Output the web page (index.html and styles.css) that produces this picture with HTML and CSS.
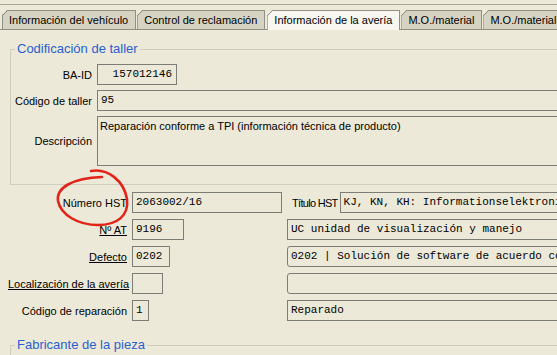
FILE: index.html
```html
<!DOCTYPE html>
<html lang="es">
<head>
	<meta charset="UTF-8">
	<title>Información de la avería</title>
	<link rel="stylesheet" href="styles.css">
</head>
<body>
	<div class="window">
		<div class="topbar"></div>
		<div class="tabs">
			<div class="tab">Información del vehículo</div>
			<div class="tab">Control de reclamación</div>
			<div class="tab active">Información de la avería</div>
			<div class="tab">M.O./material</div>
			<div class="tab">M.O./material e</div>
		</div>
		<div class="panel">
			<fieldset class="group">
				<legend>Codificación de taller</legend>
				<div class="form taller">
					<label>BA-ID</label>
					<div class="field num baid">157012146</div>
					<label>Código de taller</label>
					<div class="field num">95</div>
					<label>Descripción</label>
					<div class="field area">Reparación conforme a TPI (información técnica de producto)</div>
				</div>
			</fieldset>

			<div class="form averia">
				<label class="hst">Número HST</label>
				<div class="field num">2063002/16</div>
				<div class="titulo">
					<label class="narrow">Título HST</label>
					<div class="field num">KJ, KN, KH: Informationselektronik</div>
				</div>

				<label><a href="#">Nº AT</a></label>
				<div class="field num w-at">9196</div>
				<div class="field num">UC unidad de visualización y manejo</div>

				<label><a href="#">Defecto</a></label>
				<div class="field num w-def">0202</div>
				<div class="field num round">0202 | Solución de software de acuerdo con TPI</div>

				<label><a href="#">Localización de la avería</a></label>
				<div class="field num w-loc"></div>
				<div class="field num round"></div>

				<label>Código de reparación</label>
				<div class="field num w-rep">1</div>
				<div class="field num">Reparado</div>
			</div>

			<fieldset class="group fabricante">
				<legend>Fabricante de la pieza</legend>
			</fieldset>
		</div>

		<svg class="mark" width="557" height="355" viewBox="0 0 557 355">
			<path d="M 91 171 C 108 168, 124 181, 127 199 C 129 216, 117 225, 98 225 C 78 225, 61 215, 58 201 C 56 188, 72 178, 102 177" />
		</svg>
	</div>
</body>
</html>
```

FILE: styles.css
```css
html, body {
	margin: 0;
	padding: 0;
}
* {
	box-sizing: border-box;
}
body {
	background: #ece9d8;
	font-family: "Liberation Sans", Arial, sans-serif;
	font-size: 11px;
	color: #000;
	overflow: hidden;
}
.window {
	position: relative;
	width: 640px;
	height: 355px;
}
.topbar {
	height: 5px;
	border-bottom: 1px solid #a9a89f;
}

/* tabs */
.tabs {
	display: flex;
	gap: 1px;
	margin-top: 5px;
	padding-left: 2px;
	height: 19px;
	align-items: flex-start;
}
.tab {
	position: relative;
	height: 19px;
	line-height: 18px;
	padding: 0 7px 0 6px;
	background: #d6d3c3;
	border: 1px solid #8f8f86;
	border-bottom: none;
	clip-path: polygon(0 5px, 5px 0, 100% 0, 100% 100%, 0 100%);
	white-space: nowrap;
}
.tab::before {
	content: "";
	position: absolute;
	left: -1px;
	top: -1px;
	width: 6px;
	height: 6px;
	background: linear-gradient(to bottom right, transparent calc(50% - 0.8px), #8f8f86 50%, transparent calc(50% + 0.8px));
}
.tab.active {
	height: 20px;
	background: #f7f6f0;
	z-index: 1;
	margin-left: 1px;
}
.panel {
	border-top: 1px solid #8f8f86;
}

/* groups */
.group {
	margin: 11px 0 0 10px;
	padding: 7px 0 18px 0;
	border: 1px solid #cfcdbd;
	min-width: 0;
}
.group legend {
	margin-left: 4px;
	padding: 0 2px;
	font-size: 13px;
	line-height: 16px;
	color: #2a5fd0;
}
.fabricante {
	margin-top: 16px;
	height: 60px;
}

/* forms */
.form {
	display: grid;
	align-items: center;
}
.form label {
	text-align: right;
	white-space: nowrap;
}
.form a {
	color: #000;
	text-decoration: underline;
}
.taller {
	grid-template-columns: 81px 1fr;
	grid-template-rows: 21px 21px 50px;
	gap: 5px;
}
.taller label {
	align-self: center;
}
.averia {
	margin: 7px 0 0 8px;
	grid-template-columns: 119px 150px 1fr;
	grid-auto-rows: 21px;
	column-gap: 5px;
	row-gap: 6px;
}
.titulo {
	display: flex;
	align-items: center;
	gap: 2px;
	padding-left: 5px;
	height: 21px;
}
.titulo .field {
	flex: 1;
}
.narrow {
	letter-spacing: -0.7px;
}

/* fields */
.field {
	height: 21px;
	border: 1px solid #7d7d78;
	padding: 0 3px;
	line-height: 19px;
	white-space: nowrap;
	overflow: hidden;
}
.num {
	font-family: "Liberation Mono", "Courier New", monospace;
	font-size: 11px;
}
.baid {
	width: 80px;
	text-align: right;
	padding-right: 4px;
}
.area {
	height: 50px;
	padding: 2px 2px;
	line-height: 14px;
	white-space: normal;
}
.round {
	border-radius: 3px;
}
.w-at {
	width: 52px;
}
.w-def {
	width: 38px;
}
.w-loc {
	width: 31px;
}
.w-rep {
	width: 17px;
}

/* hand-drawn mark */
.mark {
	position: absolute;
	top: 0;
	left: 0;
	pointer-events: none;
}
.mark path {
	fill: none;
	stroke: #e2231a;
	stroke-width: 2.6;
	stroke-linecap: round;
}
```
